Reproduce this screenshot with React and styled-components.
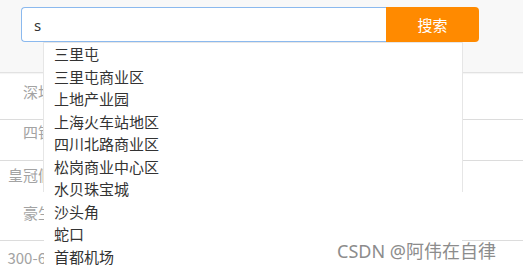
import React from 'react';
import styled, { createGlobalStyle } from 'styled-components';

const GlobalStyle = createGlobalStyle`
  html, body {
    margin: 0;
    padding: 0;
    background: #fff;
    overflow: hidden;
  }
  body {
    font-family: "Noto Sans", "Noto Sans CJK SC", sans-serif;
  }
`;

const Page = styled.div`
  position: relative;
  width: 523px;
  height: 270px;
  overflow: hidden;
`;

const Header = styled.div`
  height: 73px;
  box-sizing: border-box;
  background: #f8f8f8;
  border-bottom: 1px solid #e2e2e2;
  box-shadow: 0 1px 1px rgba(0, 0, 0, 0.04);
  padding: 7px 0 0 21px;
`;

const SearchForm = styled.div`
  position: relative;
  display: flex;
  width: 458px;
  height: 35px;
`;

const SearchInput = styled.input`
  flex: 1;
  min-width: 0;
  box-sizing: border-box;
  height: 35px;
  margin: 0;
  padding: 0 12px;
  border: 1px solid #8bb9ee;
  border-right: none;
  border-radius: 4px 0 0 4px;
  background: #fff;
  color: #333;
  font-family: "Noto Sans", "Noto Sans CJK SC", sans-serif;
  font-size: 15px;
  outline: none;
`;

const SearchButton = styled.button`
  width: 93px;
  height: 35px;
  border: none;
  border-radius: 0 4px 4px 0;
  background: #ff8a00;
  color: #fff;
  font-family: "Noto Sans CJK SC", sans-serif;
  font-size: 15px;
  padding: 0;
`;

const Suggest = styled.ul`
  position: absolute;
  left: 22px;
  top: 35px;
  width: 420px;
  height: 150px;
  box-sizing: border-box;
  margin: 0;
  padding: 0;
  list-style: none;
  border: 1px solid #e6e6e6;
  background: #fff;
  z-index: 5;
`;

const SuggestItem = styled.li`
  background: #fff;
  padding-left: 10px;
  font-family: "Noto Sans CJK SC", sans-serif;
  font-size: 15px;
  line-height: 1.5;
  color: #333;
  white-space: nowrap;
`;

const Row = styled.div`
  height: ${p => p.$h}px;
  box-sizing: border-box;
  border-bottom: ${p => (p.$line ? '1px solid #dcdcdc' : 'none')};
  padding-top: ${p => p.$pt}px;
`;

const Cell = styled.div`
  width: 106px;
  text-align: center;
  font-family: "Noto Sans CJK SC", sans-serif;
  font-size: 15px;
  line-height: 20px;
  color: #a3a3a3;
  white-space: nowrap;
  margin-bottom: ${p => p.$gap || 0}px;
`;

const Watermark = styled.div`
  position: absolute;
  left: 337px;
  top: 238px;
  z-index: 10;
  font-family: "Noto Sans", "Noto Sans CJK SC", sans-serif;
  font-size: 18px;
  line-height: 26px;
  color: #8c8c8c;
  white-space: nowrap;
`;

const suggestions = [
  '三里屯',
  '三里屯商业区',
  '上地产业园',
  '上海火车站地区',
  '四川北路商业区',
  '松岗商业中心区',
  '水贝珠宝城',
  '沙头角',
  '蛇口',
  '首都机场',
  '石景山',
];

export default function App() {
  return (
    <Page>
      <GlobalStyle />
      <Header>
        <SearchForm>
          <SearchInput defaultValue="s" />
          <SearchButton>搜索</SearchButton>
          <Suggest>
            {suggestions.map(s => (
              <SuggestItem key={s}>{s}</SuggestItem>
            ))}
          </Suggest>
        </SearchForm>
      </Header>
      <Row $h={47} $line $pt={9}>
        <Cell>深圳湾区</Cell>
      </Row>
      <Row $h={41} $line $pt={2}>
        <Cell>四银大厦</Cell>
      </Row>
      <Row $h={80} $line $pt={4}>
        <Cell $gap={18}>皇冠假日酒店</Cell>
        <Cell>豪生酒店</Cell>
      </Row>
      <Row $h={40} $pt={7}>
        <Cell>300-600元/晚</Cell>
      </Row>
      <Watermark>CSDN @阿伟在自律</Watermark>
    </Page>
  );
}
